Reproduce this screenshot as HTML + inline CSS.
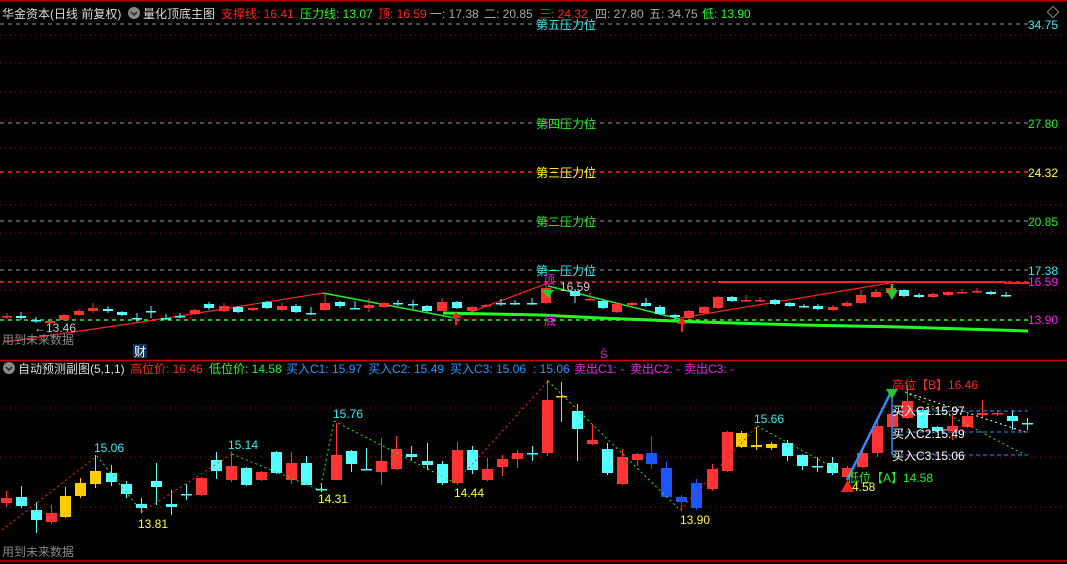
<!DOCTYPE html>
<html><head><meta charset="utf-8"><style>
html,body{margin:0;padding:0;background:#000;width:1067px;height:564px;overflow:hidden}
svg{display:block;font-family:"Liberation Sans","Noto Sans CJK SC",sans-serif}
</style></head><body>
<svg id="s" width="1067" height="564" viewBox="0 0 1067 564" xmlns="http://www.w3.org/2000/svg">
<rect width="1067" height="564" fill="#000"/>
<!-- upper grid -->
<g stroke="#a00" stroke-dasharray="1,4" stroke-width="1">
<line x1="0" y1="35" x2="1067" y2="35"/><line x1="0" y1="63" x2="1067" y2="63"/><line x1="0" y1="92" x2="1067" y2="92"/><line x1="0" y1="120" x2="1067" y2="120"/><line x1="0" y1="148" x2="1067" y2="148"/><line x1="0" y1="176" x2="1067" y2="176"/><line x1="0" y1="205" x2="1067" y2="205"/><line x1="0" y1="233" x2="1067" y2="233"/><line x1="0" y1="261" x2="1067" y2="261"/><line x1="0" y1="290" x2="1067" y2="290"/><line x1="0" y1="318" x2="1067" y2="318"/>
<line x1="0" y1="408" x2="1067" y2="408"/><line x1="0" y1="457" x2="1067" y2="457"/><line x1="0" y1="507" x2="1067" y2="507"/>
</g>
<text x="536" y="29" fill="#3ee" font-size="12">第五压力位</text>
<rect x="0" y="2" width="1067" height="17" fill="#000"/>
<line x1="0" y1="0.5" x2="1067" y2="0.5" stroke="#b00" stroke-width="2"/>
<line x1="0" y1="360.5" x2="1067" y2="360.5" stroke="#c00" stroke-width="1.5"/>
<line x1="0" y1="561" x2="1067" y2="561" stroke="#c00" stroke-width="1.5"/>
<g stroke-dasharray="4,4" stroke-width="1">
<line x1="0" y1="24" x2="1028" y2="24" stroke="#999"/>
<line x1="0" y1="123" x2="1028" y2="123" stroke="#999"/>
<line x1="0" y1="172" x2="1028" y2="172" stroke="#f22" stroke-width="1.5"/>
<line x1="0" y1="221" x2="1028" y2="221" stroke="#999"/>
<line x1="0" y1="270" x2="1028" y2="270" stroke="#999"/>
<line x1="0" y1="282" x2="1028" y2="282" stroke="#f22" stroke-width="1.5"/>
<line x1="0" y1="320" x2="1028" y2="320" stroke="#2f2" stroke-width="1.5"/>
</g>
<!-- upper lines -->
<polyline points="5,342 142,322 323,293" fill="none" stroke="#f22" stroke-width="1.2"/>
<polyline points="323,293 455,318" fill="none" stroke="#2e2" stroke-width="1.5"/>
<polyline points="455,318 548,283" fill="none" stroke="#f22" stroke-width="1.2"/>
<polyline points="548,286 680,319" fill="none" stroke="#2e2" stroke-width="1.5"/>
<polyline points="680,318 890,283" fill="none" stroke="#f22" stroke-width="1.2"/>
<polyline points="718,282 1005,282 1005,283 1030,283" fill="none" stroke="#f22" stroke-width="2"/>
<polyline points="443,313 540,315 600,318 700,322 800,325 900,327 1028,331" fill="none" stroke="#2f2" stroke-width="3"/>
<g id="uc"></g>
<g id="lc"></g>
<!-- lower lines -->
<g fill="none" stroke-width="1" stroke-dasharray="2,3">
<polyline points="2,530 97,456" stroke="#f22"/>
<polyline points="97,456 142,512" stroke="#2e2"/>
<polyline points="142,512 232,454" stroke="#f22"/>
<polyline points="232,454 320,490 334,421" stroke="#2e2"/>
<polyline points="334,421 455,483" stroke="#2e2"/>
<polyline points="455,483 548,381" stroke="#f22"/>
<polyline points="548,381 680,510" stroke="#2e2"/>
<polyline points="680,510 757,426" stroke="#f22"/>
<polyline points="757,426 838,470" stroke="#2e2"/>
<polyline points="905,392 1025,432" stroke="#fff"/>
<polyline points="905,392 1025,455" stroke="#2e2"/>
</g>
<g stroke="#2a8cff" stroke-width="1" stroke-dasharray="4,3">
<line x1="892" y1="411" x2="1028" y2="411"/><line x1="892" y1="432" x2="1028" y2="432"/><line x1="892" y1="455" x2="1028" y2="455"/>
</g>
<line x1="847" y1="480" x2="892" y2="390" stroke="#2a8cff" stroke-width="2.5"/>
<line x1="892" y1="390" x2="892" y2="455" stroke="#2a8cff" stroke-width="1.5"/>
<polygon points="841,492 854,492 847.5,480" fill="#f22"/>
<polygon points="886,389 898,389 892,399" fill="#2c2"/>
<polygon points="886,290 898,290 892,300" fill="#2c2"/><line x1="892" y1="284" x2="892" y2="292" stroke="#2c2" stroke-width="2"/>
<polygon points="542,290 554,290 548,298" fill="#2c2"/>
<polygon points="451,318 461,318 456,312" fill="#f22"/><line x1="456" y1="317" x2="456" y2="325" stroke="#f22" stroke-width="2"/>
<polygon points="677,324 687,324 682,318" fill="#f22"/><line x1="682" y1="323" x2="682" y2="332" stroke="#f22" stroke-width="2"/>
<!-- texts -->
<g font-size="12">
<text x="2" y="18" fill="#ddd">华金资本(日线 前复权)</text>
<circle cx="134" cy="13" r="6" fill="#888"/><path d="M131,12 l3,3 3,-3" stroke="#222" fill="none" stroke-width="1.5"/>
<text x="143" y="18" fill="#ddd">量化顶底主图</text>
<text x="221" y="18" fill="#f22">支撑线: 16.41</text>
<text x="300" y="18" fill="#2f2">压力线: 13.07</text>
<text x="378" y="18" fill="#f22">顶: 16.59</text>
<text x="430" y="18" fill="#aaa">一: 17.38</text>
<text x="484" y="18" fill="#aaa">二: 20.85</text>
<text x="539" y="18" fill="#f22">三: 24.32</text>
<text x="595" y="18" fill="#aaa">四: 27.80</text>
<text x="649" y="18" fill="#aaa">五: 34.75</text>
<text x="702" y="18" fill="#2f2">低: 13.90</text>
<rect x="1049" y="8" width="8" height="8" transform="rotate(45 1053 12)" fill="none" stroke="#888"/>
<text x="536" y="128" fill="#2e2">第四压力位</text>
<text x="536" y="177" fill="#ff3">第三压力位</text>
<text x="536" y="226" fill="#2e2">第二压力位</text>
<text x="536" y="275" fill="#3ee">第一压力位</text>
<text x="560" y="291" fill="#ccc">16.59</text>
<text x="543" y="284" fill="#e2e">顶</text>
<text x="544" y="325" fill="#e2e">底</text>
<text x="46" y="332" fill="#ccc">13.46</text>
<text x="34" y="332" fill="#ccc">←</text>
<text x="1028" y="29" fill="#3ee">34.75</text>
<text x="1028" y="128" fill="#2e2">27.80</text>
<text x="1028" y="177" fill="#ff3">24.32</text>
<text x="1028" y="226" fill="#2e2">20.85</text>
<text x="1028" y="275" fill="#3ee">17.38</text>
<text x="1028" y="286" fill="#e2e">16.59</text>
<text x="1028" y="324" fill="#e2e">13.90</text>
<text x="2" y="344" fill="#888">用到未来数据</text>
<rect x="133" y="344" width="14" height="14" fill="#135"/><text x="134" y="356" fill="#fff">财</text>
<text x="600" y="358" fill="#e2e" font-size="11">Ŝ</text>
<circle cx="9" cy="368" r="6" fill="#888"/><path d="M6,367 l3,3 3,-3" stroke="#222" fill="none" stroke-width="1.5"/>
<text x="18" y="373" fill="#ddd">自动预测副图(5,1,1)</text>
<text x="130" y="373" fill="#f22">高位价: 16.46</text>
<text x="209" y="373" fill="#2f2">低位价: 14.58</text>
<text x="286" y="373" fill="#29f">买入C1: 15.97</text>
<text x="368" y="373" fill="#29f">买入C2: 15.49</text>
<text x="450" y="373" fill="#29f">买入C3: 15.06</text>
<text x="533" y="373" fill="#29f">: 15.06</text>
<text x="574" y="373" fill="#e2e">卖出C1: -</text>
<text x="630" y="373" fill="#e2e">卖出C2: -</text>
<text x="684" y="373" fill="#e2e">卖出C3: -</text>
<text x="94" y="452" fill="#3ee">15.06</text>
<text x="138" y="528" fill="#ff3">13.81</text>
<text x="228" y="449" fill="#3ee">15.14</text>
<text x="318" y="503" fill="#ff3">14.31</text>
<text x="333" y="418" fill="#3ee">15.76</text>
<text x="454" y="497" fill="#ff3">14.44</text>
<text x="680" y="524" fill="#ff3">13.90</text>
<text x="754" y="423" fill="#3ee">15.66</text>
<text x="892" y="389" fill="#f22">高位【B】16.46</text>
<text x="892" y="415" fill="#fff">买入C1:15.97</text>
<text x="892" y="438" fill="#fff">买入C2:15.49</text>
<text x="892" y="460" fill="#fff">买入C3:15.06</text>
<text x="847" y="482" fill="#2e2">低位【A】14.58</text>
<text x="852" y="491" fill="#ff3">4.58</text>
<text x="2" y="556" fill="#888">用到未来数据</text>
</g>
</svg>
<script>
var R='#ff3333',C='#55ffff',Y='#ffcc00',B='#1a55ff';
var up=[[2,316,316,313,319,R],[16,316,318,312,320,C],[31,320,320,317,323,C],[45,321,323,319,325,R],[59,315,320,314,321,R],[74,311,315,309,316,R],[88,308,311,303,313,R],[103,309,311,306,313,C],[117,312,315,311,316,C],[132,318,318,313,322,C],[146,311,311,306,318,C],[161,318,318,314,320,C],[175,316,316,313,318,C],[190,310,314,309,315,R],[204,304,308,302,310,C],[219,306,311,303,312,R],[233,307,312,306,313,C],[248,308,310,307,311,R],[262,302,308,301,309,C],[277,306,310,303,311,R],[291,306,312,304,313,C],[306,313,313,307,315,C],[320,303,310,293,311,R],[335,302,306,301,308,C],[350,308,308,301,309,C],[364,305,308,298,312,R],[379,303,307,302,308,R],[393,303,303,300,306,C],[408,304,304,300,309,C],[422,306,311,305,312,C],[437,302,311,298,311,R],[452,302,308,301,309,C],[467,307,311,306,312,R],[481,305,306,304,307,R],[496,303,303,299,306,C],[510,303,303,300,305,C],[527,303,303,298,305,C],[541,288,303,282,304,R],[570,291,296,289,303,C],[585,299,299,293,300,R],[598,301,308,300,309,C],[612,304,312,303,313,R],[627,303,305,302,306,R],[641,303,306,298,307,C],[655,307,314,305,315,C],[670,315,317,314,320,C],[684,311,318,310,319,R],[699,307,313,306,314,R],[713,297,308,296,309,R],[727,297,301,296,302,C],[741,300,300,295,302,R],[755,300,300,297,302,R],[770,300,304,299,305,C],[785,303,306,302,307,C],[799,306,306,304,308,C],[813,306,309,304,310,C],[828,307,310,305,311,R],[842,303,306,301,307,R],[856,295,303,290,304,R],[871,292,297,289,298,R],[886,288,293,284,294,R],[899,290,296,289,297,C],[914,295,297,293,298,C],[928,294,297,292,298,R],[943,292,295,291,296,R],[957,292,292,289,294,R],[972,291,291,288,293,R],[986,292,294,291,295,C],[1001,295,295,292,297,C]];
var lo=[[1,498,503,491,507,R],[16,497,506,486,508,C],[31,510,520,502,533,C],[46,513,522,505,524,R],[60,496,517,487,518,Y],[75,483,496,478,498,Y],[90,471,484,455,488,Y],[106,473,482,465,486,C],[121,484,494,481,498,C],[136,504,508,498,513,C],[151,481,487,463,505,C],[166,504,507,490,515,C],[181,494,495,484,500,C],[196,478,495,477,496,R],[211,460,471,452,479,C],[226,466,480,452,482,R],[241,468,485,467,486,C],[256,472,480,471,481,R],[271,452,473,451,474,C],[286,463,480,452,484,R],[301,463,485,456,485,C],[316,489,489,483,492,C],[331,455,480,423,480,R],[346,451,464,450,472,C],[361,469,469,448,470,C],[376,461,472,438,485,R],[391,449,469,436,470,R],[406,454,457,446,460,C],[422,461,465,443,470,C],[437,464,483,461,485,C],[452,450,483,442,485,R],[467,450,470,446,474,C],[482,469,480,458,481,R],[497,459,467,455,476,R],[512,453,459,450,468,R],[527,453,453,446,461,C],[542,400,453,380,456,R],[556,396,397,382,422,Y],[572,411,429,404,461,C],[587,440,444,424,445,R],[602,449,473,443,475,C],[617,457,484,449,485,R],[632,454,460,453,466,R],[646,453,464,436,469,B],[661,468,497,461,497,B],[676,497,502,495,511,B],[691,483,508,479,510,B],[707,469,489,464,491,R],[722,432,471,431,472,R],[736,433,447,431,448,Y],[751,445,447,427,450,Y],[766,444,448,442,450,Y],[782,443,456,440,461,C],[797,455,466,454,470,C],[812,466,466,457,472,C],[827,463,473,457,475,C],[842,468,477,466,480,R],[857,453,467,450,468,R],[872,426,453,418,457,R],[887,414,427,412,428,R],[902,401,418,385,419,R],[917,410,428,409,429,C],[932,427,431,426,432,C],[947,426,431,415,440,R],[962,416,427,414,428,R],[977,413,415,400,418,R],[992,413,413,410,416,R],[1007,416,421,410,430,C],[1022,423,423,418,430,C]];
function draw(id,arr,w){var g=document.getElementById(id),h='';arr.forEach(function(c){var cx=c[0]+w/2;h+='<line x1="'+cx+'" y1="'+c[3]+'" x2="'+cx+'" y2="'+c[4]+'" stroke="'+c[5]+'"/>';var bh=Math.max(1.5,c[2]-c[1]);h+='<rect x="'+c[0]+'" y="'+c[1]+'" width="'+w+'" height="'+bh+'" fill="'+c[5]+'"/>';});g.innerHTML=h;}
draw('uc',up,10);draw('lc',lo,11);
</script>
</body></html>
